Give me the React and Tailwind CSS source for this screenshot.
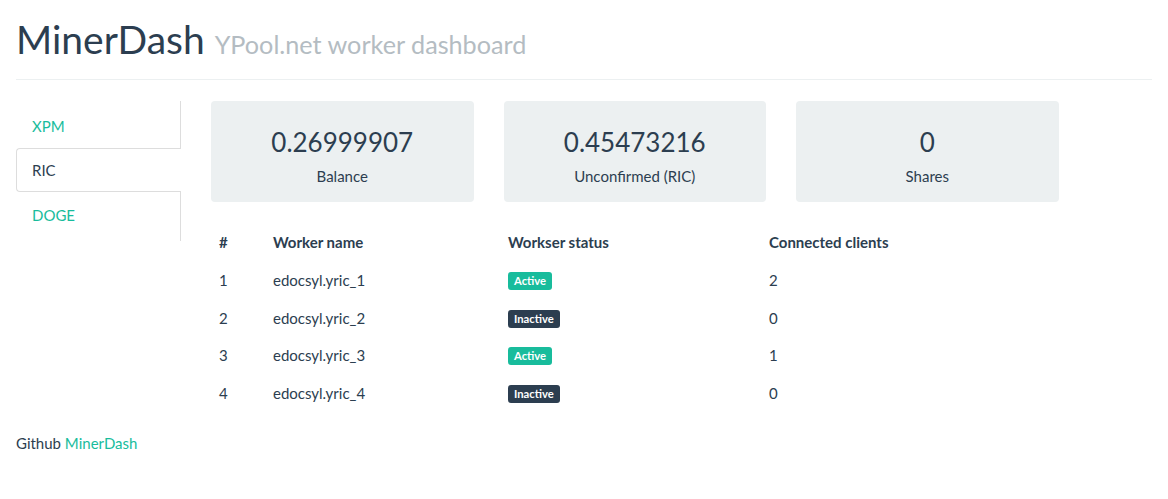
const workers = [
  { id: 1, name: 'edocsyl.yric_1', active: true, clients: 2 },
  { id: 2, name: 'edocsyl.yric_2', active: false, clients: 0 },
  { id: 3, name: 'edocsyl.yric_3', active: true, clients: 1 },
  { id: 4, name: 'edocsyl.yric_4', active: false, clients: 0 },
];

const stats = [
  { value: '0.26999907', label: 'Balance' },
  { value: '0.45473216', label: 'Unconfirmed (RIC)' },
  { value: '0', label: 'Shares' },
];

export default function App() {
  return (
    <div className="min-h-screen bg-white px-4 text-[15px] leading-[1.42857] text-[#2c3e50]" style={{ fontFamily: 'Lato, "Open Sans", sans-serif' }}>
      <div className="border-b border-[#ecf0f1] pt-[18px] pb-[18px]">
        <h1 className="text-[39px] leading-[1.1] font-normal">
          MinerDash <small className="text-[25.2px] text-[#b4bcc2]">YPool.net worker dashboard</small>
        </h1>
      </div>

      <div className="mt-[21px] flex">
        <ul className="h-[140px] w-[165px] shrink-0 border-r border-[#dddddd] pt-[4px]">
          <li className="mr-[-1px] px-4 pt-[11px] pb-[9px]">
            <a className="text-[#18bc9c]" href="#">XPM</a>
          </li>
          <li className="mt-[2px] mr-[-1px] rounded-l border border-r-0 border-[#dddddd] bg-white px-[15px] pt-[11px] pb-[9px]">
            RIC
          </li>
          <li className="mt-[3px] mr-[-1px] px-4 py-[10px]">
            <a className="text-[#18bc9c]" href="#">DOGE</a>
          </li>
        </ul>

        <div className="ml-[30px] flex-1">
          <div className="flex gap-[30px]">
            {stats.map((s) => (
              <div key={s.label} className="flex h-[101px] w-[262.5px] flex-col items-center rounded bg-[#ecf0f1] pt-[27px]">
                <div className="text-[26px] leading-[1.1]">{s.value}</div>
                <div className="mt-[10px]">{s.label}</div>
              </div>
            ))}
          </div>

          <table className="mt-[22px] w-[940px] border-collapse text-left leading-[21.4px]">
            <thead>
              <tr>
                <th className="w-[54px] px-2 pt-2 pb-[9px] font-bold">#</th>
                <th className="w-[235px] px-2 pt-2 pb-[9px] font-bold">Worker name</th>
                <th className="w-[261px] px-2 pt-2 pb-[9px] font-bold">Workser status</th>
                <th className="px-2 pt-2 pb-[9px] font-bold">Connected clients</th>
              </tr>
            </thead>
            <tbody>
              {workers.map((w) => (
                <tr key={w.id}>
                  <td className="px-2 py-2">{w.id}</td>
                  <td className="px-2 py-2">{w.name}</td>
                  <td className="px-2 py-2">
                    {w.active ? (
                      <span className="rounded-[3px] bg-[#18bc9c] px-[6px] pt-[2px] pb-[3px] align-[1px] text-[11.25px] leading-none font-bold text-white">Active</span>
                    ) : (
                      <span className="rounded-[3px] bg-[#2c3e50] px-[6px] pt-[2px] pb-[3px] align-[1px] text-[11.25px] leading-none font-bold text-white">Inactive</span>
                    )}
                  </td>
                  <td className="px-2 py-2">{w.clients}</td>
                </tr>
              ))}
            </tbody>
          </table>
        </div>
      </div>

      <p className="mt-[21px]">
        Github <a className="text-[#18bc9c]" href="#">MinerDash</a>
      </p>
    </div>
  );
}
